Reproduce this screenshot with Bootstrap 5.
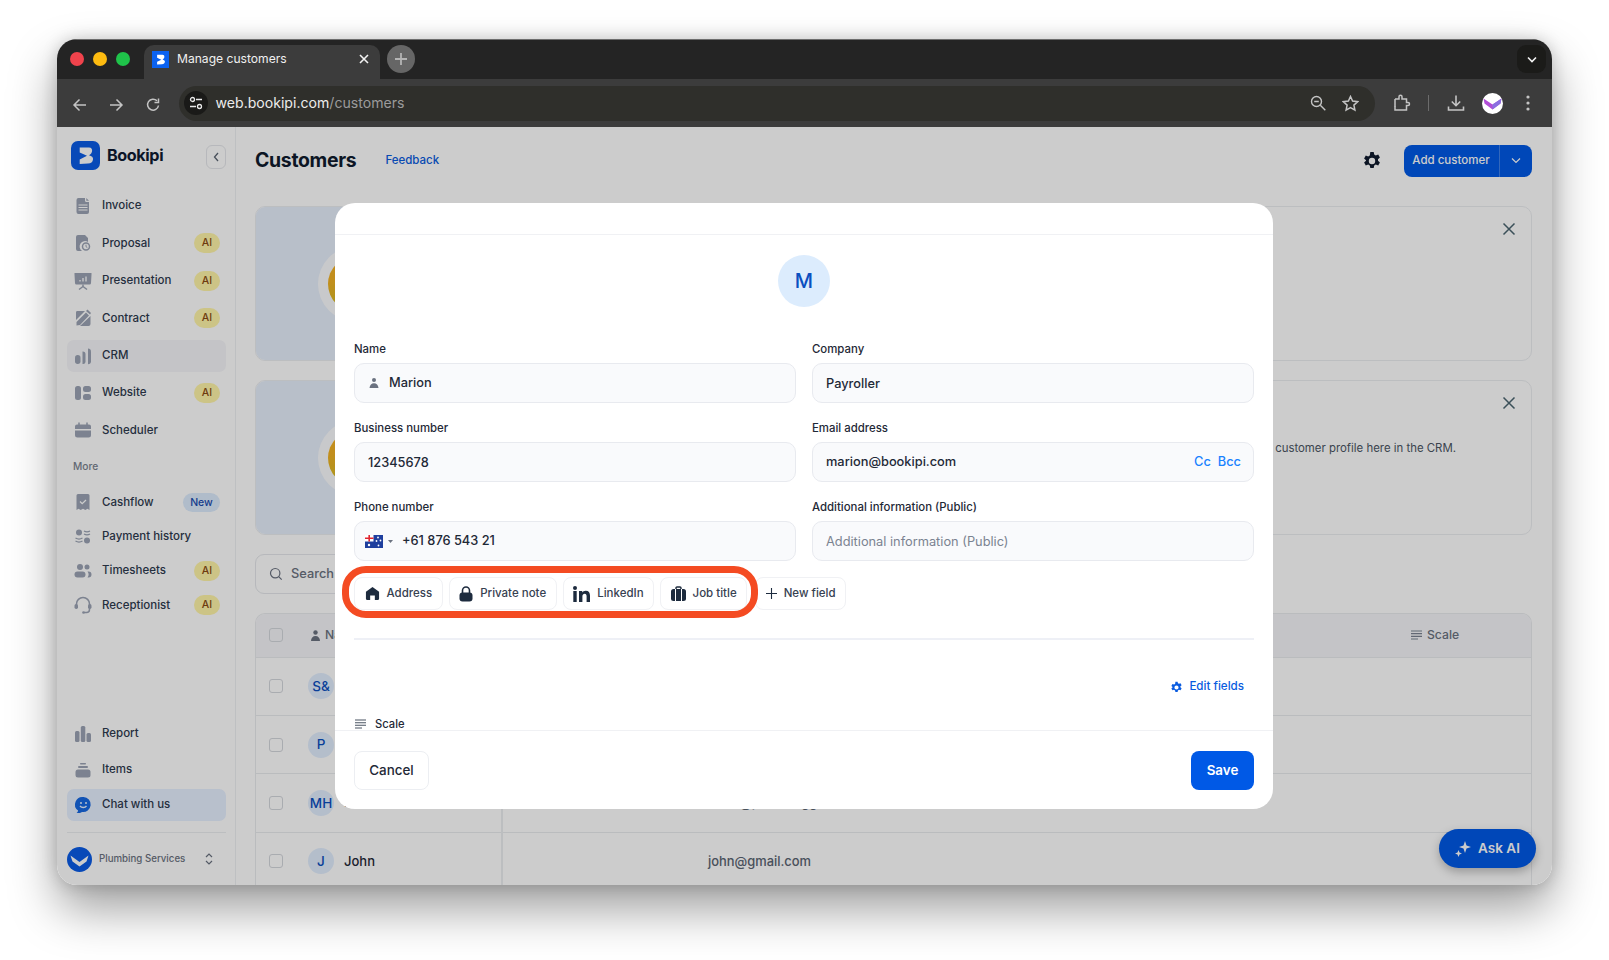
<!DOCTYPE html>
<html lang="en">

<head>
    <meta charset="UTF-8">
    <meta name="viewport" content="width=device-width, initial-scale=1.0">
    <title>Manage customers</title>
    <link href="https://cdn.jsdelivr.net/npm/bootstrap@5.3.2/dist/css/bootstrap.min.css" rel="stylesheet">
    <script src="https://cdn.jsdelivr.net/npm/bootstrap@5.3.2/dist/js/bootstrap.bundle.min.js"></script>
    <style>
        html, body { height: 960px; overflow: hidden; }
        body { background: #fff; padding: 39px 57px 0; font-family: "Inter", "Liberation Sans", sans-serif; color: #1f2937; }

        /* browser window */
        .win { height: 846px; border-radius: 20px; overflow: hidden; box-shadow: 0 24px 48px rgba(0,0,0,.38), 0 0 16px rgba(0,0,0,.18); }
        .tabstrip { height: 40px; background: #242424; padding: 5px 6px 0 0; border-top: 1px solid #6d6d6d; }
        .lights { width: 87px; padding-left: 13px; gap: 9px; height: 28px; }
        .lights i { width: 14px; height: 14px; border-radius: 50%; display: block; }
        .chrome-tab { width: 236px; height: 34px; background: #3c3c3c; border-radius: 10px 10px 0 0; padding: 0 10px 6px 8px; color: #f0f0f0; font-size: 12.1px; gap: 8px; }
        .plus-btn { width: 28px; height: 28px; border-radius: 50%; background: #666; margin-left: 7px; }
        .tabs-menu { width: 29px; height: 28px; background: #1b1b19; border-radius: 9px; }
        .toolbar { height: 48px; background: #3c3c3c; padding: 0 14px 0 15px; }
        .tool-ico { width: 36.5px; }
        .addr { width: 1196px; height: 35px; margin-left: -3px; border-radius: 18px; background: #2f2f2b; padding: 0 16px 0 5px; font-size: 14.1px; color: #ececec; }
        .addr-ico { width: 24px; height: 24px; border-radius: 50%; background: #1a1a18; margin-right: 8px; }
        .addr span { color: #9b9b9b; }

        /* app */
        .app { height: 758px; background: #fff; }
        .shade { position: absolute; inset: 0; background: rgba(0,0,0,.2); }
        .sidebar { width: 179px; border-right: 1px solid #eef0f3; padding: 14px 9px 0 10px; }
        .brand-name { font-size: 16.2px; font-weight: 700; letter-spacing: -.4px; color: #0f1b33; margin-left: 7px; }
        .collapse-btn { width: 20px; height: 24px; margin-left: auto; margin-top: 2px; border: 1px solid #e5e7eb; border-radius: 6px; }
        .side-a { gap: 5.4px; margin-top: 20px; }
        .side-b { gap: 2.3px; }
        .side-c { gap: 3.5px; margin-top: auto; margin-bottom: 11px; }
        .side-more { height: 40px; padding-left: 6px; font-size: 10.2px; font-weight: 500; color: #7a8290; line-height: 40px; }
        .side-link { height: 32px; padding: 0 6px; border-radius: 7px; font-size: 11.5px; font-weight: 500; color: #2e3a4e; gap: 9px; }
        .side-link:hover { color: #2e3a4e; }
        .side-link svg { width: 20px; height: 20px; flex: none; color: #9ba3b4; }
        .side-link.is-on { background: #f5f6f9; }
        .side-link.is-chat { background: #e6f0ff; }
        .tag-ai { margin-left: auto; width: 26px; height: 20px; padding: 0; line-height: 20px; background: #fff5a8; color: #8a4a12; font-size: 10.5px; font-weight: 500; }
        .tag-new { margin-left: auto; width: 37px; height: 19px; padding: 0; line-height: 19px; background: #dcebfd; color: #1a4bb0; font-size: 10.5px; font-weight: 500; }
        .side-foot { height: 53px; border-top: 1px solid #eceef1; gap: 7px; font-size: 9.7px; color: #6b7280; font-weight: 500; }

        /* main */
        .main { padding: 0 20px 0 19px; min-width: 0; }
        .page-head { height: 66px; margin-bottom: 13px; padding-top: 1px; }
        .page-title { font-size: 19.4px; font-weight: 700; letter-spacing: -.3px; color: #0f1b2e; margin: 0 29px 0 0; }
        .feedback { font-size: 11.5px; font-weight: 500; color: #0a5ce0; text-decoration: none; }
        .gear-btn { margin-right: 22px; color: #0f1b2e; }
        .add-main, .add-more { background: #0059e6; border: 0; height: 32px; color: #fff; font-size: 11.5px; font-weight: 500; }
        .add-main { width: 96px; padding: 0 2px 0 0; border-radius: 8px 0 0 8px; }
        .btn-group .add-more { width: 33px; padding: 0; margin-left: 0; border-left: 1px solid rgba(255,255,255,.25); border-radius: 0 8px 8px 0; }
        .promo { height: 155px; border-color: #eceef1; border-radius: 10px; margin-bottom: 19px; overflow: hidden; flex-direction: row; }
        .promo-pic { width: 300px; background: #e7effc; padding-left: 62px; }
        .promo-halo { width: 76px; height: 76px; border-radius: 50%; background: #fff; padding: 10px; opacity: .85; flex: none; }
        .promo-ball { width: 100%; height: 100%; border-radius: 50%; background: linear-gradient(165deg, #f6a800 35%, #e0b000 62%, #8cc21a); }
        .promo-body { padding: 59px 75px 0 0; font-size: 11.4px; color: #4b5563; }
        .promo-x { position: absolute; right: 15px; top: 15px; color: #4a6470; }
        .search-box { width: 400px; height: 40px; border: 1px solid #e5e7eb; border-radius: 9px; padding-left: 13px; gap: 8px; font-size: 12.8px; font-weight: 500; color: #6b7280; margin-bottom: 19px; }
        .cust-wrap { border: 1px solid #e9ebee; border-radius: 10px 10px 0 0; border-bottom: 0; height: 272px; overflow: hidden; }
        .cust-table { table-layout: fixed; margin: 0; --bs-table-bg: transparent; font-size: 13px; }
        .cust-table th, .cust-table td { padding: 0; vertical-align: middle; border-color: #e9ebee; }
        .cust-table thead tr { height: 43px; background: #f5f6f9; }
        .cust-table th { font-size: 12.2px; font-weight: 500; color: #6b7280; }
        .cust-table tbody tr { height: 58.4px; }
        .cust-table .name-col { border-right: 2px solid #eceef1; }
        .tick { width: 14px; height: 14px; border: 1px solid #d4d7dc; border-radius: 3px; margin-left: 12.5px; display: block; }
        .cust-ava { width: 26px; height: 26px; border-radius: 50%; background: #e2eefe; color: #0b4fc0; font-size: 13.5px; font-weight: 500; flex: none; margin-right: 10px; margin-left: 6px; }
        .cust-name { font-weight: 500; color: #1f2937; }
        .cust-mail { padding-left: 205px !important; font-weight: 500; color: #5b6472; font-size: 12.9px; }
        .ask-ai { position: absolute; right: 16px; bottom: 17px; width: 97px; height: 39px; border-radius: 20px; background: #0059e6; color: #fff; font-size: 13.5px; font-weight: 600; gap: 7px; box-shadow: 0 4px 10px rgba(0,0,0,.25); }

        /* modal */
        .cust-modal { position: absolute; left: 278px; top: 76px; width: 938px; height: 606px; background: #fff; border: 0; border-radius: 20px; overflow: hidden; }
        .cust-modal .modal-header { height: 32px; padding: 0; border-bottom: 1px solid #f0f1f4; border-radius: 0; flex: none; }
        .cust-modal .modal-body { padding: 20px 19px 0; overflow: hidden; }
        .big-ava { width: 52px; height: 52px; border-radius: 50%; background: #dcecfd; color: #0b4fc0; font-size: 20px; font-weight: 500; margin: 0 auto 34px; }
        .field-row { margin-bottom: 17px; }
        .field-row .form-label { display: block; font-size: 11.4px; font-weight: 500; line-height: 16px; margin-bottom: 6px; color: #1f2937; }
        .field-row .form-control { height: 40px; padding: 0 13px; background: #f9fafc; border: 1px solid #e8eaef; border-radius: 10px; font-size: 12.8px; font-weight: 500; color: #1f2937; }
        .field-row .form-control::placeholder { color: #7b8391; font-weight: 400; }
        .field-in { border: 0; background: transparent; outline: 0; font: inherit; color: inherit; min-width: 0; flex: 1; padding: 0; }
        .cc-link { color: #1a82ff; font-weight: 500; margin-left: 7px; text-decoration: none; }
        .cc-link:last-child { margin-right: -1px; }
        .chip-row { margin-top: -1px; height: 33px; gap: 6px; }
        .chip-ring { gap: 6px; position: relative; margin-right: 2px; }
        .chip-ring::before { content: ""; position: absolute; inset: -11px -11px -8px -12px; border: 7px solid #f44b22; border-radius: 24px; }
        .field-chip { height: 33px; padding: 0 9.5px; gap: 7px; border: 1px solid #f0f1f4; border-radius: 8px; background: #fff; font-size: 11.5px; font-weight: 500; color: #374151; }
        .rule-line { height: 2px; background: #eef0f6; margin-top: 28px; }
        .edit-row { margin: 37px 10px 0 0; font-size: 11.6px; font-weight: 500; color: #0a5ce0; gap: 6px; height: 20px; }
        .scale-row { margin: 20px 0 0 1px; font-size: 11.2px; line-height: 14px; font-weight: 500; gap: 9px; height: 14px; white-space: nowrap; }
        .cust-modal .modal-footer { height: 79px; padding: 20px 19px 19px; border-top: 1px solid #f0f1f4; justify-content: space-between; flex: none; }
        .cust-modal .modal-footer > * { margin: 0; }
        .cancel-btn { width: 75px; height: 39px; padding: 0; background: #fff; border: 1px solid #eceef2; border-radius: 8px; font-size: 13.4px; font-weight: 500; color: #1f2937; }
        .save-btn { width: 63px; height: 39px; padding: 0; background: #0059e6; border: 0; border-radius: 8px; font-size: 13.4px; font-weight: 600; color: #fff; }
    </style>
</head>

<body>
    <div class="win d-flex flex-column">
        <!-- tabs -->
        <div class="tabstrip d-flex align-items-start">
            <div class="lights d-flex align-items-center">
                <i style="background:#f0434c"></i><i style="background:#fdbb10"></i><i style="background:#1fc34a"></i>
            </div>
            <div class="chrome-tab d-flex align-items-center">
                <svg width="17" height="17" viewBox="0 0 29 29"><rect width="29" height="29" fill="#0b62f0"/><path d="M8.700 6.500H18c2.500 0 3.500 2 3 4-.2 1.500-1.500 3-3 3.800 2.500.7 4.500 2.200 4 4.200-.3 2.500-2 4-5 4l-8.300.5v-4.500l7.300-3.700-7.300-3.300z" fill="#fff"/></svg>
                <span class="flex-grow-1">Manage customers</span>
                <svg width="12" height="12" viewBox="0 0 12 12"><path d="M2 2l8 8M10 2l-8 8" stroke="#f2f2f2" stroke-width="1.600"/></svg>
            </div>
            <div class="plus-btn d-flex align-items-center justify-content-center">
                <svg width="14" height="14" viewBox="0 0 14 14"><path d="M7 1v12M1 7h12" stroke="#b5b5b5" stroke-width="1.800"/></svg>
            </div>
            <div class="tabs-menu ms-auto d-flex align-items-center justify-content-center">
                <svg width="10" height="7" viewBox="0 0 10 7"><path d="M1 1.500l4 4 4-4" fill="none" stroke="#f2f2f2" stroke-width="1.600"/></svg>
            </div>
        </div>

        <!-- toolbar -->
        <div class="toolbar d-flex align-items-center">
            <div class="tool-ico"><svg width="16" height="16" viewBox="0 0 16 16"><path d="M14 8H2.500M7.500 2.500L2 8l5.500 5.500" fill="none" stroke="#c4c4c4" stroke-width="1.500"/></svg></div>
            <div class="tool-ico"><svg style="margin-left:-1px" width="16" height="16" viewBox="0 0 16 16"><path d="M2 8h11.500M8.500 2.500L14 8l-5.500 5.500" fill="none" stroke="#c4c4c4" stroke-width="1.500"/></svg></div>
            <div class="tool-ico"><svg width="16" height="16" viewBox="0 0 16 16"><path d="M13.500 8.500A5.500 5.500 0 1 1 12 3.800" fill="none" stroke="#c4c4c4" stroke-width="1.500"/><path d="M13.500 1.500v4h-4" fill="none" stroke="#c4c4c4" stroke-width="1.500"/></svg></div>
            <div class="addr d-flex align-items-center">
                <div class="addr-ico d-flex align-items-center justify-content-center">
                    <svg width="14" height="14" viewBox="0 0 14 14"><circle cx="3.500" cy="3.500" r="2" fill="none" stroke="#e8e8e8" stroke-width="1.300"/><path d="M7 3.500h6M1 10.500h6" stroke="#e8e8e8" stroke-width="1.300"/><circle cx="10.500" cy="10.500" r="2" fill="none" stroke="#e8e8e8" stroke-width="1.300"/></svg>
                </div>
                web.bookipi.com<span>/customers</span>
                <svg class="ms-auto" style="margin-right:16px" width="16" height="16" viewBox="0 0 16 16"><circle cx="6.500" cy="6.500" r="5" fill="none" stroke="#c4c4c4" stroke-width="1.400"/><path d="M4.200 6.500h4.600M10.300 10.300l5 5" stroke="#c4c4c4" stroke-width="1.400"/></svg>
                <svg width="17" height="17" viewBox="0 0 17 17"><path d="M8.500 1.500l2.100 4.600 5 .6-3.700 3.400 1 5-4.400-2.500-4.400 2.500 1-5L1.400 6.700l5-.6z" fill="none" stroke="#c4c4c4" stroke-width="1.500"/></svg>
            </div>
            <svg style="margin-left:18px" width="18" height="18" viewBox="0 0 18 18"><path d="M2 5h4V2.800a1.500 1.500 0 0 1 3 0V5h4.500v3.500h1.500a1.500 1.500 0 0 1 0 3h-1.500V16H2v-3.500" fill="none" stroke="#c4c4c4" stroke-width="1.500"/><path d="M2 5v8" stroke="#c4c4c4" stroke-width="1.500"/></svg>
            <div style="width:1.500px;height:16px;background:#6c6c6c;margin:0 18px 0 17px"></div>
            <svg width="18" height="18" viewBox="0 0 18 18"><path d="M9 1.500v10M4.800 7.500L9 11.700l4.200-4.200M1.500 12.500v3.500h15v-3.500" fill="none" stroke="#c4c4c4" stroke-width="1.600"/></svg>
            <svg style="margin-left:17px" width="21" height="21" viewBox="0 0 21 21"><circle cx="10.500" cy="10.500" r="10.500" fill="#fff"/><path d="M1.500 5.500l9 6 9-6-1 5-8 6-8-6z" fill="#b14ed6"/><path d="M10.500 11.500l9-6-1 5-8 6z" fill="#8a6fe0"/></svg>
            <svg style="margin-left:23px" width="4" height="16" viewBox="0 0 4 16"><circle cx="2" cy="2" r="1.600" fill="#c4c4c4"/><circle cx="2" cy="8" r="1.600" fill="#c4c4c4"/><circle cx="2" cy="14" r="1.600" fill="#c4c4c4"/></svg>
        </div>

        <!-- bookipi -->
        <div class="app d-flex position-relative">
            <aside class="sidebar d-flex flex-column flex-shrink-0">
                <div class="d-flex align-items-center" style="margin-left:4px;height:29px">
                    <svg width="29" height="29" viewBox="0 0 29 29"><rect width="29" height="29" rx="7" fill="#0b5ce6"/><path d="M8.700 6.500H18c2.500 0 3.500 2 3 4-.2 1.500-1.500 3-3 3.800 2.500.7 4.500 2.200 4 4.200-.3 2.500-2 4-5 4l-8.300.5v-4.500l7.300-3.700-7.300-3.300z" fill="#fff"/></svg>
                    <span class="brand-name">Bookipi</span>
                    <div class="collapse-btn d-flex align-items-center justify-content-center">
                        <svg width="6" height="10" viewBox="0 0 6 10"><path d="M5 1L1.500 5 5 9" fill="none" stroke="#5b6472" stroke-width="1.300"/></svg>
                    </div>
                </div>

                <nav class="nav flex-column flex-nowrap side-a">
                    <a class="nav-link d-flex align-items-center side-link"><svg viewBox="0 0 20 20" fill="currentColor"><path d="M5.500 2H12v2.500A1.500 1.500 0 0 0 13.500 6H16v10a2 2 0 0 1-2 2H5.500a2 2 0 0 1-2-2V4a2 2 0 0 1 2-2z"/><path d="M13.300 2l2.700 2.700h-2.700z"/><path d="M5.500 9h9M5.500 11.500h9M5.500 14h9" stroke="#fff" stroke-width="1"/></svg>Invoice</a>
                    <a class="nav-link d-flex align-items-center side-link"><svg viewBox="0 0 20 20" fill="currentColor"><path d="M5 2h7l3 3v4a5 5 0 0 0-6 9H5a2 2 0 0 1-2-2V4a2 2 0 0 1 2-2z"/><circle cx="13" cy="13.500" r="3.500" fill="none" stroke="currentColor" stroke-width="1.500"/><path d="M13 11.700v2l1.300.8" stroke="currentColor" fill="none"/></svg>Proposal<span class="badge rounded-pill tag-ai">AI</span></a>
                    <a class="nav-link d-flex align-items-center side-link"><svg viewBox="0 0 20 20" fill="currentColor"><path d="M1.500 2h17v1.500L18 12a1.500 1.500 0 0 1-1.500 1.500h-13A1.500 1.500 0 0 1 2 12L1.500 3.500z"/><path d="M7 10.500V9M10 10.500V7M13 10.500V5.500" stroke="#fff" stroke-width="1.300"/><path d="M10 13.500v2.500M10 15.500l-4 3M10 15.500l4 3" stroke="currentColor" stroke-width="1.500" fill="none"/></svg>Presentation<span class="badge rounded-pill tag-ai">AI</span></a>
                    <a class="nav-link d-flex align-items-center side-link"><svg viewBox="0 0 20 20" fill="currentColor"><path d="M4 3h8L3 12V4.500A1.500 1.500 0 0 1 4 3zM17.500 8v8a2 2 0 0 1-2 2H7zM3.500 17.500V14L13 4.500l3 3-9 9.500z"/><path d="M14.500 1.500l3.500 3.500-1 1.500L13 3z"/></svg>Contract<span class="badge rounded-pill tag-ai">AI</span></a>
                    <a class="nav-link d-flex align-items-center side-link is-on"><svg viewBox="0 0 20 20" fill="currentColor"><rect x="2" y="9" width="5.500" height="9" rx="2.700"/><path d="M9.500 5.500a2.500 2.500 0 0 1 3 2.500v8a2.500 2.500 0 0 1-3 2z"/><path d="M15 2.500c1.800 0 3 1.300 3 3v10c0 1.500-1.200 2.700-3 2.700z"/></svg>CRM</a>
                    <a class="nav-link d-flex align-items-center side-link"><svg viewBox="0 0 20 20" fill="currentColor"><rect x="2" y="3" width="6" height="14" rx="2.500"/><rect x="10" y="3" width="8" height="6" rx="2.500"/><rect x="10" y="11" width="8" height="6" rx="2.500"/></svg>Website<span class="badge rounded-pill tag-ai">AI</span></a>
                    <a class="nav-link d-flex align-items-center side-link"><svg viewBox="0 0 20 20" fill="currentColor"><path d="M4 4.500h12a2 2 0 0 1 2 2V9H2V6.500a2 2 0 0 1 2-2zM2 10.500h16V15a2.500 2.500 0 0 1-2.500 2.500h-11A2.500 2.500 0 0 1 2 15z"/><path d="M6 2.500v3M14 2.500v3" stroke="currentColor" stroke-width="1.500"/></svg>Scheduler</a>
                </nav>

                <div class="side-more">More</div>

                <nav class="nav flex-column flex-nowrap side-b">
                    <a class="nav-link d-flex align-items-center side-link"><svg viewBox="0 0 20 20" fill="currentColor"><path d="M5 2h10a1.500 1.500 0 0 1 1.500 1.500V18l-2-1.200-2.200 1.200-2.300-1.200-2.300 1.200L5.500 16.800l-2 1.200V3.500A1.500 1.500 0 0 1 5 2z"/><path d="M7 9.500l2.200 2.200L13 8" fill="none" stroke="#fff" stroke-width="1.300"/></svg>Cashflow<span class="badge rounded-pill tag-new">New</span></a>
                    <a class="nav-link d-flex align-items-center side-link"><svg viewBox="0 0 20 20" fill="currentColor"><circle cx="6" cy="5.500" r="3"/><circle cx="14" cy="13.500" r="3"/><path d="M2.500 11c2 1.200 5 1.200 7 0M2.500 14c2 1.200 5 1.200 7 0M11 7c1.800 1 4.200 1 6 0M11 4c1.800 1 4.200 1 6 0" fill="none" stroke="currentColor" stroke-width="1.300"/></svg>Payment history</a>
                    <a class="nav-link d-flex align-items-center side-link"><svg viewBox="0 0 20 20" fill="currentColor"><circle cx="7" cy="6" r="3"/><circle cx="14" cy="6" r="2.500"/><rect x="1.500" y="10.500" width="11" height="6" rx="3"/><path d="M14.500 10.500h1a3 3 0 0 1 0 6h-1a5 5 0 0 0 0-6z"/></svg>Timesheets<span class="badge rounded-pill tag-ai">AI</span></a>
                    <a class="nav-link d-flex align-items-center side-link"><svg viewBox="0 0 20 20" fill="currentColor"><path d="M3.500 11V9a6.500 6.500 0 0 1 13 0v2M16.500 13v1.500a3 3 0 0 1-3 3H11" fill="none" stroke="currentColor" stroke-width="1.500"/><rect x="1.500" y="9" width="3.500" height="5" rx="1.700"/><rect x="15" y="9" width="3.500" height="5" rx="1.700"/><circle cx="10.500" cy="17.500" r="1.300"/></svg>Receptionist<span class="badge rounded-pill tag-ai">AI</span></a>
                </nav>

                <nav class="nav flex-column flex-nowrap side-c">
                    <a class="nav-link d-flex align-items-center side-link"><svg viewBox="0 0 20 20" fill="currentColor"><rect x="2" y="7" width="4.500" height="11" rx="1.500"/><rect x="7.800" y="2" width="4.500" height="16" rx="1.500"/><rect x="13.500" y="9" width="4.500" height="9" rx="1.500"/></svg>Report</a>
                    <a class="nav-link d-flex align-items-center side-link"><svg viewBox="0 0 20 20" fill="currentColor"><rect x="7" y="3" width="6" height="1.500" rx=".7"/><rect x="5" y="6" width="10" height="2" rx="1"/><rect x="2.500" y="9.500" width="15" height="8" rx="2.500"/></svg>Items</a>
                    <a class="nav-link d-flex align-items-center side-link is-chat"><svg style="color:#1668e3" viewBox="0 0 20 20" fill="currentColor"><path d="M10.500 2a7.500 7.500 0 1 1-1.500 14.900c-1.500 1-3.600 1.300-5.500 1.100 1-.7 1.500-1.500 1.600-2.500A7.500 7.500 0 0 1 10.500 2z"/><circle cx="8" cy="8" r="1" fill="#e6f0ff"/><circle cx="13" cy="8" r="1" fill="#e6f0ff"/><path d="M7 11c1.500 2 5 2 6.500 0" fill="none" stroke="#e6f0ff" stroke-width="1.300"/></svg>Chat with us</a>
                </nav>

                <div class="side-foot d-flex align-items-center">
                    <svg class="flex-shrink-0" width="25" height="25" viewBox="0 0 25 25"><circle cx="12.500" cy="12.500" r="12.500" fill="#0b5ce6"/><path d="M3.500 8.500l9 6.500 9-6.500-2 6-7 5-7-5z" fill="#fff"/></svg>
                    <span class="flex-grow-1">Plumbing Services</span>
                    <svg style="margin-right:13px" width="8" height="12" viewBox="0 0 8 12"><path d="M1 4l3-3 3 3M1 8l3 3 3-3" fill="none" stroke="#6b7280" stroke-width="1.200"/></svg>
                </div>
            </aside>

            <main class="main flex-grow-1">
                <div class="page-head d-flex align-items-center">
                    <h1 class="page-title">Customers</h1>
                    <a class="feedback" href="#">Feedback</a>
                    <svg class="gear-btn ms-auto" width="20" height="20" viewBox="0 0 20 20"><path fill="currentColor" fill-rule="evenodd" d="M8.300 1h3.400l.5 2.500 1.600.9 2.400-.8 1.700 2.900-1.900 1.700v1.600l1.900 1.700-1.700 2.900-2.400-.8-1.600.9-.5 2.500H8.300l-.5-2.500-1.600-.9-2.400.8-1.700-2.900 1.900-1.700V9.200L2.100 7.500l1.700-2.900 2.400.8 1.600-.9zM10 6.800a3.200 3.200 0 1 0 0 6.400 3.200 3.200 0 0 0 0-6.400z"/></svg>
                    <div class="btn-group">
                        <button class="btn add-main" type="button">Add customer</button>
                        <button class="btn add-more" type="button"><svg width="10" height="7" viewBox="0 0 10 7"><path d="M1 1.500l4 4 4-4" fill="none" stroke="#fff" stroke-width="1.200"/></svg></button>
                    </div>
                </div>

                <div class="card promo position-relative">
                    <div class="promo-pic d-flex align-items-center"><div class="promo-halo"><div class="promo-ball"></div></div></div>
                    <svg class="promo-x" width="14" height="14" viewBox="0 0 14 14"><path d="M1.500 1.500l11 11M12.500 1.500l-11 11" stroke="currentColor" stroke-width="1.500"/></svg>
                </div>
                <div class="card promo position-relative">
                    <div class="promo-pic d-flex align-items-center"><div class="promo-halo"><div class="promo-ball"></div></div></div>
                    <div class="promo-body ms-auto">customer profile here in the CRM.</div>
                    <svg class="promo-x" width="14" height="14" viewBox="0 0 14 14"><path d="M1.500 1.500l11 11M12.500 1.500l-11 11" stroke="currentColor" stroke-width="1.500"/></svg>
                </div>

                <div class="search-box d-flex align-items-center">
                    <svg width="14" height="14" viewBox="0 0 14 14"><circle cx="6.200" cy="6.200" r="4.700" fill="none" stroke="#6b7280" stroke-width="1.200"/><path d="M9.700 9.700l3 3" stroke="#6b7280" stroke-width="1.200"/></svg>
                    Search
                </div>

                <div class="cust-wrap">
                    <table class="table cust-table">
                        <colgroup><col style="width:46px"><col style="width:200px"><col><col style="width:132px"></colgroup>
                        <thead>
                            <tr>
                                <th><span class="tick"></span></th>
                                <th class="name-col"><div class="d-flex align-items-center" style="margin-left:8px;gap:4px"><svg width="11" height="11" viewBox="0 0 11 11" fill="#6b7280"><circle cx="5.500" cy="2.500" r="2.200"/><path d="M1 11c0-3 1.800-5 4.500-5s4.500 2 4.500 5z"/></svg>Name</div></th>
                                <th></th>
                                <th><div class="d-flex align-items-center" style="margin-left:12px;gap:5px"><svg width="11" height="10" viewBox="0 0 11 10"><path d="M0 1h11M0 3.700h11M0 6.300h11M0 9h7" stroke="#7b8391" stroke-width="1.200"/></svg>Scale</div></th>
                            </tr>
                        </thead>
                        <tbody>
                            <tr><td><span class="tick"></span></td><td class="name-col"><div class="d-flex align-items-center"><span class="cust-ava d-flex align-items-center justify-content-center">S&amp;</span><span class="cust-name">Smith &amp; Co</span></div></td><td class="cust-mail"></td><td></td></tr>
                            <tr><td><span class="tick"></span></td><td class="name-col"><div class="d-flex align-items-center"><span class="cust-ava d-flex align-items-center justify-content-center">P</span><span class="cust-name">Paul</span></div></td><td class="cust-mail"></td><td></td></tr>
                            <tr><td><span class="tick"></span></td><td class="name-col"><div class="d-flex align-items-center"><span class="cust-ava d-flex align-items-center justify-content-center">MH</span><span class="cust-name">Mark Hill</span></div></td><td class="cust-mail">mark@plumbingg.com</td><td></td></tr>
                            <tr><td><span class="tick"></span></td><td class="name-col"><div class="d-flex align-items-center"><span class="cust-ava d-flex align-items-center justify-content-center">J</span><span class="cust-name">John</span></div></td><td class="cust-mail">john@gmail.com</td><td></td></tr>
                        </tbody>
                    </table>
                </div>
            </main>

            <div class="ask-ai d-flex align-items-center justify-content-center">
                <svg width="16" height="16" viewBox="0 0 16 16" fill="#fff"><path d="M10 0l1.500 4.500L16 6l-4.500 1.500L10 12 8.500 7.500 4 6l4.500-1.500zM3.500 9l1 2.500 2.500 1-2.500 1-1 2.500-1-2.500-2.500-1 2.500-1z"/></svg>
                Ask AI
            </div>

            <div class="shade"></div>

            <!-- edit customer modal -->
            <div class="modal-content cust-modal">
                <div class="modal-header"></div>
                <div class="modal-body">
                    <div class="big-ava d-flex align-items-center justify-content-center">M</div>

                    <div class="row gx-3 field-row">
                        <div class="col-6">
                            <label class="form-label">Name</label>
                            <div class="form-control d-flex align-items-center">
                                <svg style="margin-right:9px" width="12" height="12" viewBox="0 0 12 12" fill="#6b7280"><circle cx="6" cy="3" r="2"/><path d="M1.500 11c.3-3 2-4.800 4.500-4.800s4.200 1.800 4.500 4.800z"/></svg>
                                <input class="field-in" type="text" value="Marion">
                            </div>
                        </div>
                        <div class="col-6">
                            <label class="form-label">Company</label>
                            <input class="form-control" type="text" value="Payroller">
                        </div>
                    </div>
                    <div class="row gx-3 field-row">
                        <div class="col-6">
                            <label class="form-label">Business number</label>
                            <input class="form-control" type="text" value="12345678">
                        </div>
                        <div class="col-6">
                            <label class="form-label">Email address</label>
                            <div class="form-control d-flex align-items-center">
                                <input class="field-in" type="text" value="marion@bookipi.com">
                                <a class="cc-link">Cc</a><a class="cc-link">Bcc</a>
                            </div>
                        </div>
                    </div>
                    <div class="row gx-3 field-row">
                        <div class="col-6">
                            <label class="form-label">Phone number</label>
                            <div class="form-control d-flex align-items-center">
                                <svg class="flex-shrink-0" style="margin-left:-3px" width="18" height="13" viewBox="0 0 18 13"><rect width="18" height="13" fill="#1f3f9e"/><rect width="8.500" height="6.500" fill="#fff"/><path d="M4.200 0v6.500M0 3.200h8.500" stroke="#e0242f" stroke-width="1.600"/><circle cx="4" cy="10" r="1.200" fill="#fff"/><circle cx="13" cy="2.500" r=".9" fill="#fff"/><circle cx="15.500" cy="5.500" r=".9" fill="#fff"/><circle cx="11.500" cy="6" r=".9" fill="#fff"/><circle cx="13.500" cy="10.500" r=".9" fill="#fff"/></svg>
                                <svg class="flex-shrink-0" style="margin:0 9px 0 5px" width="5" height="3" viewBox="0 0 5 3"><path d="M0 0h5L2.500 3z" fill="#6b7280"/></svg>
                                <input class="field-in" type="text" value="+61 876 543 21">
                            </div>
                        </div>
                        <div class="col-6">
                            <label class="form-label">Additional information (Public)</label>
                            <input class="form-control" type="text" placeholder="Additional information (Public)">
                        </div>
                    </div>

                    <div class="chip-row d-flex">
                        <div class="chip-ring d-flex">
                            <div class="field-chip d-flex align-items-center"><svg width="15" height="15" viewBox="0 0 16 15" fill="#1d2b3e"><path d="M8 .5l7 5.200V13a1.500 1.500 0 0 1-1.500 1.500h-3V9.500h-5v5h-3A1.500 1.500 0 0 1 1 13V5.700z"/></svg>Address</div>
                            <div class="field-chip d-flex align-items-center"><svg width="14" height="16" viewBox="0 0 14 16"><path d="M3.500 7V4.500a3.500 3.500 0 0 1 7 0V7" fill="none" stroke="#1d2b3e" stroke-width="1.600"/><rect x=".5" y="6.500" width="13" height="9" rx="3" fill="#1d2b3e"/></svg>Private note</div>
                            <div class="field-chip d-flex align-items-center"><svg width="17" height="16" viewBox="0 0 17 16" fill="#1d2b3e"><circle cx="2" cy="2" r="2"/><rect x=".3" y="5" width="3.400" height="11"/><path d="M6 5h3.200v1.500c.7-1.100 2-1.800 3.500-1.800 3 0 4.300 1.900 4.300 5V16h-3.400v-5.700c0-1.600-.6-2.500-1.900-2.500s-2.300 1-2.300 2.600V16H6z"/></svg>LinkedIn</div>
                            <div class="field-chip d-flex align-items-center"><svg width="15" height="15" viewBox="0 0 15 15"><path d="M5 3.500V2a1 1 0 0 1 1-1h3a1 1 0 0 1 1 1v1.500" fill="none" stroke="#1d2b3e" stroke-width="1.400"/><rect y="3" width="15" height="12" rx="2.500" fill="#1d2b3e"/><path d="M4.500 3v12M10.500 3v12" stroke="#fff" stroke-width="1"/></svg>Job title</div>
                        </div>
                        <div class="field-chip d-flex align-items-center"><svg width="11" height="11" viewBox="0 0 11 11"><path d="M5.500 0v11M0 5.500h11" stroke="#1d2b3e" stroke-width="1.100"/></svg>New field</div>
                    </div>

                    <div class="rule-line"></div>

                    <div class="edit-row d-flex align-items-center justify-content-end">
                        <svg width="13" height="13" viewBox="0 0 20 20"><path fill="currentColor" fill-rule="evenodd" d="M8.300 1h3.400l.5 2.500 1.600.9 2.400-.8 1.700 2.900-1.900 1.700v1.600l1.900 1.700-1.700 2.900-2.400-.8-1.600.9-.5 2.500H8.300l-.5-2.500-1.600-.9-2.400.8-1.700-2.900 1.900-1.700V9.200L2.100 7.500l1.700-2.900 2.400.8 1.600-.9zM10 6.800a3.200 3.200 0 1 0 0 6.400 3.200 3.200 0 0 0 0-6.400z"/></svg>
                        Edit fields
                    </div>
                    <div class="scale-row d-flex align-items-center">
                        <svg width="11" height="10" viewBox="0 0 11 10"><path d="M0 1h11M0 3.700h11M0 6.300h11M0 9h7" stroke="#4b5563" stroke-width="1.100"/></svg>
                        Scale
                    </div>
                </div>
                <div class="modal-footer">
                    <button class="btn cancel-btn" type="button">Cancel</button>
                    <button class="btn save-btn" type="button">Save</button>
                </div>
            </div>
        </div>
    </div>
</body>

</html>
